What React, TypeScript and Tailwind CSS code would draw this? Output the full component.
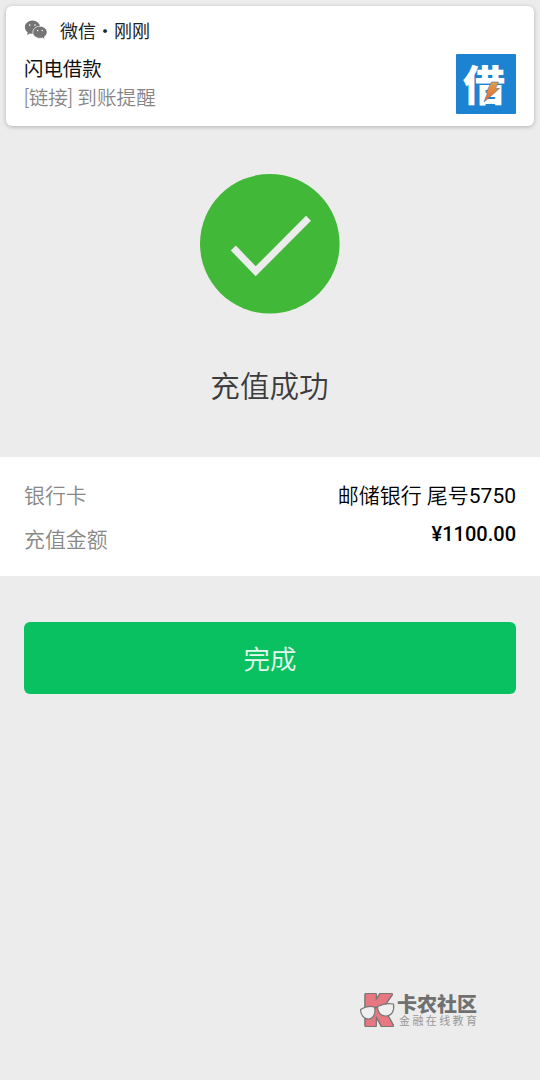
import type { ReactNode } from "react";

const BANK_NAME = "邮储银行 尾号";
const CARD_TAIL = "5750";
const AMOUNT = "¥1100.00";

export default function App() {
  return (
    <div className="flex h-[1080px] w-[540px] flex-col overflow-hidden bg-[#ececec] font-['Noto_Sans_CJK_SC',sans-serif]">
      <Notification />

      <main className="flex flex-col">
        <section className="flex flex-col items-center pt-12">
          <SuccessIcon />
          <h1 className="mt-[49px] mr-px h-[45px] text-[29.6px] leading-[44px] font-[350] text-[#3c3c3c]">
            充值成功
          </h1>
        </section>

        <dl className="mt-[49px] h-[119px] bg-white px-6 pt-[21px]">
          <Row label="银行卡">
            <span className="mt-[2px] font-['Roboto','Noto_Sans_CJK_SC',sans-serif] text-[21px] leading-8 font-[350] text-black">
              {BANK_NAME}
              <span className="font-normal">{CARD_TAIL}</span>
            </span>
          </Row>
          <Row label="充值金额" className="mt-[12px]">
            <span className="-mt-[4px] font-['Roboto',sans-serif] text-[20px] leading-8 font-medium text-black">
              {AMOUNT}
            </span>
          </Row>
        </dl>

        <div className="px-6 pt-[46px]">
          <button className="h-[72px] w-full rounded-md bg-[#09c160] text-[26.5px] leading-[72px] font-[350] text-white/90">
            完成
          </button>
        </div>
      </main>

      <Watermark />
    </div>
  );
}

function Notification() {
  return (
    <header className="mx-1.5 mt-1.5 flex h-[120px] shrink-0 justify-between rounded-md bg-white px-[18px] shadow-[0_1px_4px_rgba(0,0,0,0.25)]">
      <div className="flex flex-col">
        <div className="mt-3 flex h-6 items-center gap-3">
          <WechatIcon />
          <span className="text-[18px] leading-6 text-[#222]">微信・刚刚</span>
        </div>
        <div className="mt-[12px] h-7 text-[19.4px] leading-7 text-[#111]">闪电借款</div>
        <div className="mt-[2px] h-7 font-['Roboto','Noto_Sans_CJK_SC',sans-serif] text-[19.6px] leading-[30px] font-[350] text-[#858585]">
          [链接] 到账提醒
        </div>
      </div>
      <LoanLogo />
    </header>
  );
}

function Row({
  label,
  className = "",
  children,
}: {
  label: string;
  className?: string;
  children: ReactNode;
}) {
  return (
    <div className={`flex h-8 items-start justify-between ${className}`}>
      <dt className="text-[20.9px] leading-8 font-[350] text-[#888]">{label}</dt>
      <dd className="flex">{children}</dd>
    </div>
  );
}

function WechatIcon() {
  return (
    <svg width="24" height="20" viewBox="0 0 24 20" className="shrink-0">
      <path
        d="M8.500.5C4.200.5.900 3.500.900 7.200c0 2.100 1.100 3.900 2.800 5.100L3 15l3-1.500c.8.200 1.600.3 2.500.3 4.200 0 7.600-2.900 7.600-6.600S12.700.5 8.500.5Z"
        fill="#747474"
      />
      <path
        d="M15.900 6.300c-4 0-7.100 2.700-7.100 6s3.100 6 7.100 6c.9 0 1.700-.1 2.500-.4l2.600 1.500-.7-2.500c1.700-1.100 2.800-2.700 2.800-4.600 0-3.300-3.200-6-7.200-6Z"
        fill="#747474"
        stroke="#fff"
        strokeWidth="0.7"
      />
      <g fill="#fff">
        <circle cx="5.800" cy="5.100" r="0.800" />
        <circle cx="11" cy="5.100" r="0.800" />
        <circle cx="13.600" cy="10.500" r="0.700" />
        <circle cx="18.200" cy="10.500" r="0.700" />
      </g>
    </svg>
  );
}

function LoanLogo() {
  return (
    <div className="relative mt-12 h-[60px] w-[60px] rounded-[1px] bg-[#1b83d2]">
      <span className="block pl-[7px] text-[42px] leading-[57px] font-extrabold text-white">借</span>
      <svg className="absolute inset-0" width="60" height="60" viewBox="0 0 60 60">
        <defs>
          <linearGradient id="bolt" x1="0" y1="0" x2="0" y2="1">
            <stop offset="0" stopColor="#d9a24c" />
            <stop offset="1" stopColor="#ec642c" />
          </linearGradient>
        </defs>
        <path
          d="M35.500 28h7l-3 6.500h4L28 48l3.500-9H30Z"
          fill="url(#bolt)"
          stroke="#6f7890"
          strokeWidth="0.700"
        />
      </svg>
    </div>
  );
}

function SuccessIcon() {
  return (
    <svg width="140" height="140" viewBox="0 0 140 140">
      <circle cx="69.800" cy="69.800" r="69.800" fill="#41b837" />
      <path d="M33.300 74 55.700 97.300 108.500 44.300" fill="none" stroke="#ececec" strokeWidth="7" />
    </svg>
  );
}

function Watermark() {
  return (
    <footer className="mt-auto mb-[50px] ml-[359px] flex h-10 items-start">
      <svg width="38" height="40" viewBox="0 0 38 40" className="shrink-0 overflow-visible">
        <text
          x="5.500"
          y="34"
          fontFamily="Noto Sans CJK SC, sans-serif"
          fontWeight="900"
          fontSize="38"
          textLength="25"
          lengthAdjust="spacingAndGlyphs"
          fill="#e77780"
          stroke="#e77780"
          strokeWidth="4"
          className="[filter:drop-shadow(1px_0_0_#777)_drop-shadow(-1px_0_0_#777)_drop-shadow(0_1px_0_#777)_drop-shadow(0_-1px_0_#777)]"
        >
          K
        </text>
        <g fill="#efefef" stroke="#777" strokeWidth="1.200">
          <path d="M1.500 19.500q7-4.500 14-2.500c1.500 6-1 12-6 12s-8-4.500-8-9.500Z" />
          <path d="M18.500 16.500q8-4 16-2.500c1 7-1.500 12-8 12-5 0-8-4-8-9.500Z" />
          <path d="M15.500 18q1.500-1.500 3 0" fill="none" />
        </g>
      </svg>
      <div className="flex flex-col">
        <span className="h-[23px] text-[20px] leading-[27px] font-black text-[#707070]">
          卡农社区
        </span>
        <span className="mt-[2px] ml-[2px] text-[11px] leading-[11px] tracking-[2.400px] text-[#999]">
          金融在线教育
        </span>
      </div>
    </footer>
  );
}
